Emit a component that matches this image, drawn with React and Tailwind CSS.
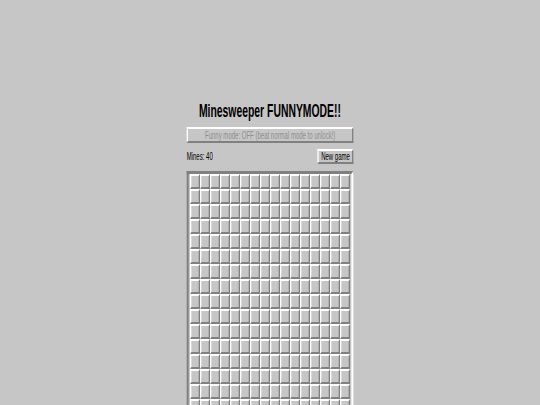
import React from "react";

const ROWS = 16;
const COLS = 16;

const cells = Array.from({ length: ROWS * COLS }, (_, i) => i);

// Arial Narrow is not installed, so Liberation Sans is narrowed by hand
const narrow = "inline-block whitespace-nowrap scale-x-[0.82]";

export default function App() {
  return (
    <div className="h-screen w-full overflow-hidden bg-[#c6c6c6]">
      {/* page is drawn wide and squeezed horizontally, like the screenshot */}
      <div className="w-[810px] origin-top-left scale-x-[0.6667] flex flex-col items-center pt-[100px] font-['Liberation_Sans',Arial,sans-serif] text-black">
        <h1 className="text-[19px] leading-[22px] font-bold">
          <span className={narrow}>Minesweeper FUNNYMODE!!</span>
        </h1>

        <div className="w-[250px] mt-[5px] flex flex-col">
          <button
            disabled
            className="h-[16px] w-full flex items-center justify-center border-2 border-t-white border-l-white border-r-[#808080] border-b-[#808080] bg-[#c6c6c6] text-[11px] leading-none text-[#8e8e8e]"
          >
            <span className={`${narrow} shrink-0`}>Funny mode: OFF (beat normal mode to unlock!)</span>
          </button>

          <div className="mt-[5px] h-[17px] flex items-center justify-between">
            <span className={`${narrow} origin-left text-[11px] leading-none`}>Mines: 40</span>
            <button className="h-[15px] w-[54px] flex items-center justify-center border-2 border-t-white border-l-white border-r-[#808080] border-b-[#808080] bg-[#c6c6c6] text-[11px] leading-none">
              <span className={`${narrow} shrink-0`}>New game</span>
            </button>
          </div>

          <div className="mt-[6px] border-[3px] border-t-[#808080] border-l-[#808080] border-r-white border-b-white px-[2px]">
            <div className="grid grid-cols-[repeat(16,15px)]">
              {cells.map((i) => (
                <div
                  key={i}
                  className="h-[15px] w-[15px] border-2 border-t-white border-l-white border-r-[#808080] border-b-[#808080] bg-[#c6c6c6]"
                />
              ))}
            </div>
          </div>
        </div>
      </div>
    </div>
  );
}
